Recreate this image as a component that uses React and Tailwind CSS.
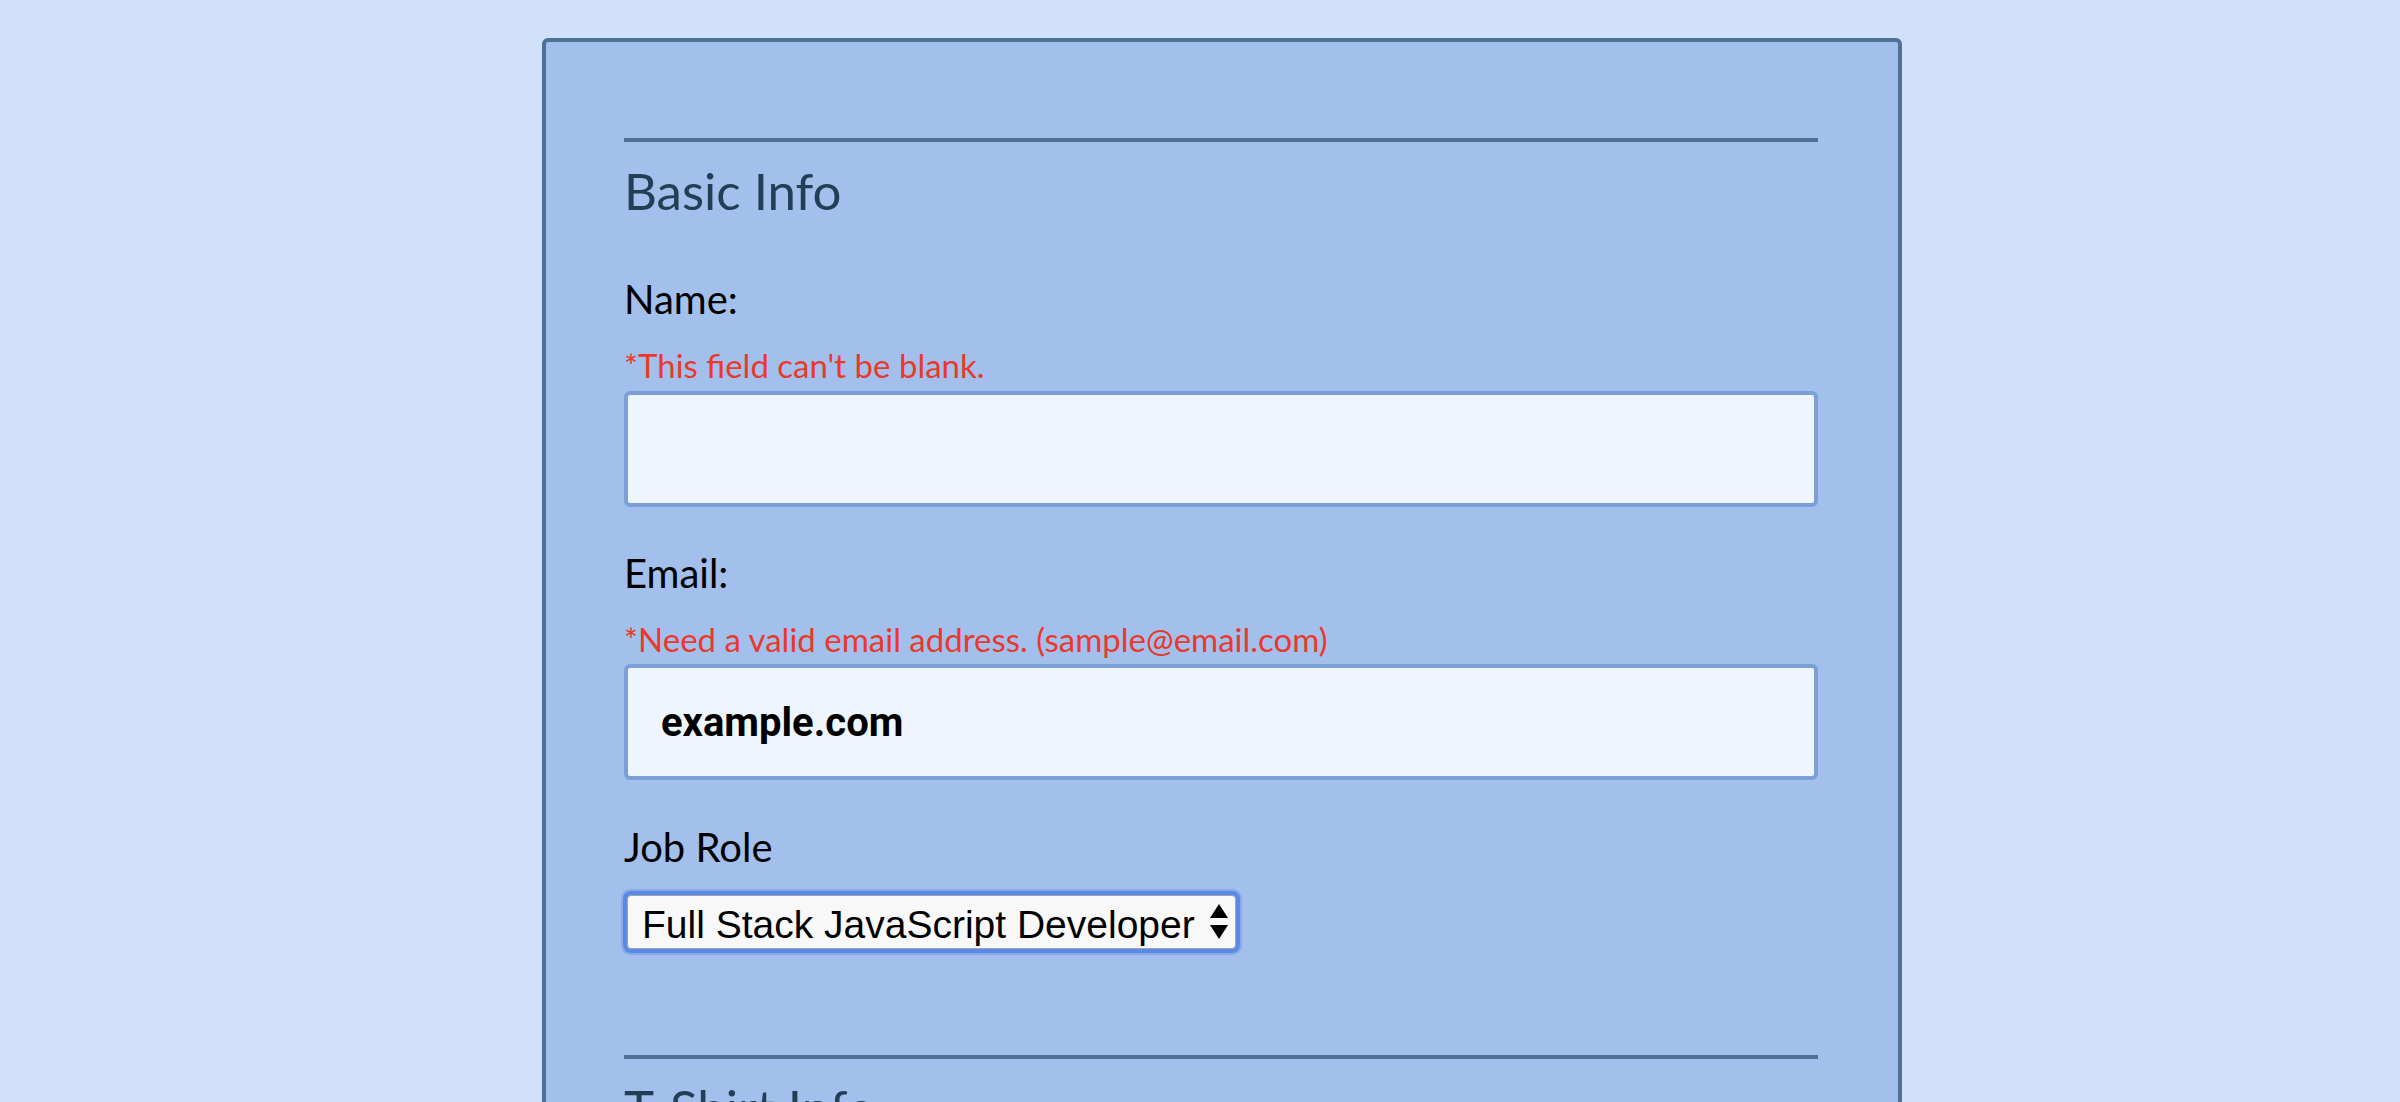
import React, { useState } from "react";

const Field = ({ label, error, value, onChange }) => (
    <div className="flex flex-col">
        <label className="text-[40px] leading-[1.2] text-black">{label}</label>
        <span className="mt-[23px] text-[33px] leading-[1.2] text-[#e9392c]">{error}</span>
        <input
            type="text"
            value={value}
            onChange={(e) => onChange(e.target.value)}
            className="mt-[5px] h-[116px] w-full rounded-[6px] border-4 border-[#7ba0d7] bg-[#eef5fc] pl-[33px] font-['Roboto',sans-serif] text-[40px] font-bold text-black outline-none"
        />
    </div>
);

const App = () => {
    const [name, setName] = useState("");
    const [email, setEmail] = useState("example.com");
    const [role, setRole] = useState("full-stack");

    return (
        <div className="min-h-screen bg-[#d0e1f9] pt-[38px] font-['Lato',sans-serif]">
            <form className="ml-[542px] w-[1360px] rounded-[6px] border-4 border-[#4f7194] bg-[#a2c0eb] pl-[78px] pr-[80px] pt-[96px] pb-[120px]">
                <fieldset>
                    <div className="h-[4px] bg-[#4f7194]" />
                    <h2 className="mt-[18px] text-[51px] leading-[1.2] text-[#223f56]">Basic Info</h2>

                    <div className="mt-[54px]">
                        <Field
                            label="Name:"
                            error="*This field can't be blank."
                            value={name}
                            onChange={setName}
                        />
                    </div>

                    <div className="mt-[42px]">
                        <Field
                            label="Email:"
                            error="*Need a valid email address. (sample@email.com)"
                            value={email}
                            onChange={setEmail}
                        />
                    </div>

                    <label className="mt-[43px] block text-[40px] leading-[1.2] text-black">Job Role</label>
                    <div className="relative ml-[3px] mt-[24px] w-[609px]">
                        <select
                            value={role}
                            onChange={(e) => setRole(e.target.value)}
                            className="h-[54px] w-full appearance-none rounded-[4px] border border-[#9aa7b8] bg-[#f8f8f8] pl-[14px] font-['Liberation_Sans',sans-serif] text-[39px] text-black outline-none shadow-[0_0_0_4px_#5a8ae6,0_0_0_6px_#86aaec]"
                        >
                            <option value="full-stack">Full Stack JavaScript Developer</option>
                            <option value="front-end">Front End Developer</option>
                            <option value="back-end">Back End Developer</option>
                            <option value="designer">Designer</option>
                            <option value="other">Other</option>
                        </select>
                        <svg className="pointer-events-none absolute right-[8px] top-[9px]" width="18" height="36" viewBox="0 0 18 36">
                            <path d="M9 0 L18 14 L0 14 Z" fill="#000" />
                            <path d="M0 21 L18 21 L9 35 Z" fill="#000" />
                        </svg>
                    </div>
                </fieldset>

                <fieldset className="mt-[106px]">
                    <div className="h-[4px] bg-[#4f7194]" />
                    <h2 className="mt-[18px] text-[51px] leading-[1.2] text-[#223f56]">T-Shirt Info</h2>
                </fieldset>
            </form>
        </div>
    );
};

export default App;
